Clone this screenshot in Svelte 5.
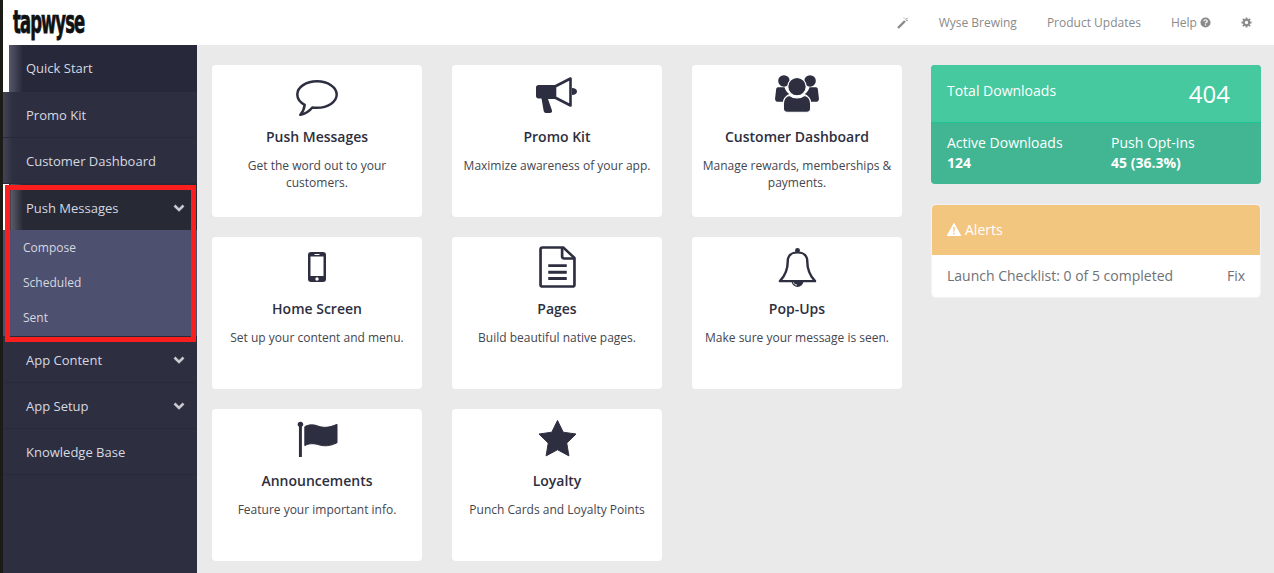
<script>
	const top = [
		{ label: 'Quick Start', cls: 'active' },
		{ label: 'Promo Kit', cls: 'fade' },
		{ label: 'Customer Dashboard', cls: 'fade' }
	];
	const pushItems = ['Compose', 'Scheduled', 'Sent'];
	const bottom = [
		{ label: 'App Content', chevron: true },
		{ label: 'App Setup', chevron: true },
		{ label: 'Knowledge Base' }
	];
	const cards = [
		{ icon: 'chat', title: 'Push Messages', text: 'Get the word out to your customers.' },
		{ icon: 'horn', title: 'Promo Kit', text: 'Maximize awareness of your app.' },
		{ icon: 'users', title: 'Customer Dashboard', text: 'Manage rewards, memberships & payments.' },
		{ icon: 'phone', title: 'Home Screen', text: 'Set up your content and menu.' },
		{ icon: 'page', title: 'Pages', text: 'Build beautiful native pages.' },
		{ icon: 'bell', title: 'Pop-Ups', text: 'Make sure your message is seen.' },
		{ icon: 'flag', title: 'Announcements', text: 'Feature your important info.' },
		{ icon: 'star', title: 'Loyalty', text: 'Punch Cards and Loyalty Points' }
	];
</script>

{#snippet chevron()}
	<svg class="chev" viewBox="0 0 12 8" width="12" height="8"><path d="M1.500 1.500 6 6l4.500-4.500" fill="none" stroke="currentColor" stroke-width="2.600" /></svg>
{/snippet}

<div class="page">
	<header class="topbar">
		<span class="logo">tapwyse</span>
		<nav>
			<svg class="wand" viewBox="0 0 12 12" width="12" height="12"><path d="M1 11 8 4" stroke="currentColor" stroke-width="2.400" /><path d="M9 1v2M11 3.500H9M7 .5v1M11 .8l-1 1" stroke="currentColor" stroke-width=".8" /></svg>
			<a href="#a">Wyse Brewing</a>
			<a href="#a">Product Updates</a>
			<a href="#a" class="help">Help
				<svg viewBox="0 0 12 12" width="11" height="11"><circle cx="6" cy="6" r="5.500" fill="currentColor" /><path d="M4.200 4.700C4.300 3.600 5 3 6 3s1.900.6 1.900 1.600C7.900 5.900 6 5.800 6 7" fill="none" stroke="#fff" stroke-width="1.300" /><rect x="5.300" y="8" width="1.400" height="1.400" fill="#fff" /></svg>
			</a>
			<svg class="gear" viewBox="0 0 12 12" width="11" height="11"><circle cx="6" cy="6" r="2.900" fill="none" stroke="currentColor" stroke-width="2.200" /><path d="M6 .5v2M6 9.500v2M.5 6h2M9.500 6h2M2.100 2.100l1.400 1.400M8.500 8.500l1.400 1.400M2.100 9.900l1.400-1.400M8.500 3.500l1.400-1.400" stroke="currentColor" stroke-width="2" /></svg>
		</nav>
	</header>

	<div class="body">
		<aside>
			{#each top as item}
				<a href="#a" class="side {item.cls}">{item.label}</a>
			{/each}
			<div class="push">
				<a href="#a" class="side active">Push Messages {@render chevron()}</a>
				<div class="sub">
					{#each pushItems as s}
						<a href="#a">{s}</a>
					{/each}
				</div>
				<div class="highlight"></div>
			</div>
			{#each bottom as item}
				<a href="#a" class="side">{item.label}{#if item.chevron}{@render chevron()}{/if}</a>
			{/each}
		</aside>

		<main>
			<section class="grid">
				{#each cards as card}
					<article>
						<div class="ico">
							{#if card.icon === 'chat'}
								<svg viewBox="0 0 44 42" width="44" height="42"><path d="M22 7.300C11.100 7.300 2.300 13.200 2.300 20.500c0 4.200 2.900 7.900 7.400 10.300-.5 3.800-2 7.400-4.400 10 4.800-.8 9-3.500 12-7.300 1.500.2 3.100.3 4.700.3 10.900 0 19.700-5.900 19.700-13.200S32.900 7.300 22 7.300Z" fill="none" stroke="#2d2f40" stroke-width="2.500" stroke-linejoin="round" /></svg>
							{:else if card.icon === 'horn'}
								<svg viewBox="0 0 42 36" width="42" height="36"><path d="M19 9.500 34.500 1.500v27L19 20.500Z" fill="none" stroke="#2d2f40" stroke-width="2.600" stroke-linejoin="round" /><path d="M2.500 8H19v14h-7l4 11.500c.3 1.300-.5 2.500-2 2.500h-4c-1.300 0-2-.7-2.300-2L5.500 21.500H2.500C1 21.500 0 20.500 0 19v-8.500C0 9 1 8 2.500 8Z" fill="#2d2f40" /><path d="M36 11c3 0 5 1.500 5 3.500S39 18 36 18Z" fill="#2d2f40" /></svg>
							{:else if card.icon === 'users'}
								<svg viewBox="0 0 44 40" width="46" height="42"><circle cx="9.500" cy="6.500" r="5.500" fill="#2d2f40" /><circle cx="34.500" cy="6.500" r="5.500" fill="#2d2f40" /><path d="M2 15c0-2 1-2.500 3-2.500h5c1 3 2.500 5 4.500 6.500-3 1.500-5.500 4-6 7.500H4c-2 0-3-1-3-3Z" fill="#2d2f40" /><path d="M42 15c0-2-1-2.500-3-2.500h-5c-1 3-2.500 5-4.500 6.500 3 1.500 5.500 4 6 7.500H40c2 0 3-1 3-3Z" fill="#2d2f40" /><circle cx="22" cy="12" r="8.800" fill="#2d2f40" stroke="#fff" stroke-width="1" /><path d="M15 20.500c2 1.500 4.500 2.300 7 2.300s5-.8 7-2.300c3.500.5 6 3.500 6 8.500v4c0 2.500-1.500 3.500-3.500 3.500h-19C10.500 36.500 9 35.500 9 33v-4c0-5 2.500-8 6-8.500Z" fill="#2d2f40" stroke="#fff" stroke-width="1" /></svg>
							{:else if card.icon === 'phone'}
								<svg viewBox="0 0 18 30" width="18" height="30"><rect width="18" height="30" rx="3" fill="#2d2f40" /><rect x="2.500" y="4.500" width="13" height="19.500" fill="#fff" /><rect x="6.500" y="2" width="5" height="1" fill="#fff" /><circle cx="9" cy="27" r="1.700" fill="#fff" /></svg>
							{:else if card.icon === 'page'}
								<svg viewBox="0 0 36 44" width="37" height="42" preserveAspectRatio="none"><path d="M3.500 1.500h20l11 11v28c0 1.200-.8 2-2 2h-29c-1.200 0-2-.8-2-2v-37c0-1.200.8-2 2-2Z" fill="none" stroke="#2d2f40" stroke-width="2.600" stroke-linejoin="round" /><path d="M22.500 2v9c0 1.200.8 2 2 2h9.500" fill="none" stroke="#2d2f40" stroke-width="2.600" /><path d="M9 19h18v3H9ZM9 26h18v3H9ZM9 32.500h18v3H9Z" fill="#2d2f40" /></svg>
							{:else if card.icon === 'bell'}
								<svg viewBox="0 0 40 42" width="39" height="42"><path d="M20 6c-6 0-10 3.500-10 9 0 8-2 14-8 20.500h36c-6-6.500-8-12.500-8-20.500 0-5.500-4-9-10-9Z" fill="none" stroke="#2d2f40" stroke-width="2.500" stroke-linejoin="round" /><circle cx="20" cy="4" r="2.500" fill="#2d2f40" /><path d="M14 36.500c.5 3 3 5 6 5s5.500-2 6-5Z" fill="#2d2f40" /><path d="M15.800 36.800c.5 1.700 2 2.700 3.700 2.700" fill="none" stroke="#fff" stroke-width="1" /></svg>
							{:else if card.icon === 'flag'}
								<svg viewBox="0 0 42 38" width="41" height="36" preserveAspectRatio="none"><circle cx="3.500" cy="3.500" r="2.800" fill="#2d2f40" /><rect x="2" y="5" width="3" height="33" fill="#2d2f40" /><path d="M8 6c4-2.500 9-2.500 14-.5 6 2 11 1.500 19-2v19.500c-7 3.500-13 4-19 2-5-1.500-10-1.500-14 1Z" fill="#2d2f40" stroke="#2d2f40" stroke-width="1" stroke-linejoin="round" /></svg>
							{:else}
								<svg viewBox="0 0 40 41" width="39" height="41"><path d="m20 1 5.900 12 13.100 1.900-9.500 9.300 2.200 13.100L20 31l-11.700 6.300 2.200-13.100L1 14.900 14.100 13Z" fill="#2d2f40" stroke="#2d2f40" stroke-linejoin="round" /></svg>
							{/if}
						</div>
						<h3>{card.title}</h3>
						<p>{card.text}</p>
					</article>
				{/each}
			</section>

			<section class="right">
				<div class="stats">
					<div class="total">
						<span>Total Downloads</span>
						<strong>404</strong>
					</div>
					<div class="split">
						<div>Active Downloads<b>124</b></div>
						<div>Push Opt-ins<b>45 (36.3%)</b></div>
					</div>
				</div>
				<div class="alerts">
					<div class="alert-head">
						<svg viewBox="0 0 14 13" width="14" height="13"><path d="M7 .5 13.700 12.500H.3Z" fill="#fff" stroke="#fff" stroke-linejoin="round" /><path d="M6.200 4h1.600l-.2 4.800H6.400ZM6.200 9.700h1.600v1.500H6.200Z" fill="#f3c680" /></svg>
						Alerts
					</div>
					<div class="alert-row">
						<span>Launch Checklist: 0 of 5 completed</span>
						<a href="#a">Fix</a>
					</div>
				</div>
			</section>
		</main>
	</div>
</div>

<style>
	:global(body) {
		margin: 0;
		background: #eaeaea;
		font-family: 'Open Sans', sans-serif;
		overflow: hidden;
	}

	a {
		color: inherit;
		text-decoration: none;
	}

	.page {
		height: 573px;
		display: flex;
		flex-direction: column;
		border-left: 3px solid #1b1b18;
	}

	.topbar {
		height: 45px;
		flex: none;
		background: #fff;
		display: flex;
		justify-content: space-between;
		align-items: center;
		padding: 0 22px 0 10px;
	}

	.logo {
		font-family: 'DejaVu Sans', sans-serif;
		font-stretch: condensed;
		font-weight: 700;
		font-size: 25px;
		line-height: 30px;
		color: #111;
		letter-spacing: -1.200px;
		transform: scale(0.73, 1.25);
		transform-origin: left center;
		-webkit-text-stroke: 0.6px #111;
	}

	nav {
		display: flex;
		align-items: center;
		font-size: 12px;
		color: #8a8a8a;
		gap: 30px;
	}

	.help svg {
		vertical-align: -1px;
	}

	.body {
		flex: 1;
		display: flex;
		min-height: 0;
	}

	aside {
		width: 194px;
		flex: none;
		background: #2d2f40;
		font-size: 13px;
		color: #d6d8e0;
	}

	.side {
		display: flex;
		justify-content: space-between;
		align-items: center;
		height: 46px;
		padding: 0 12px 0 23px;
		border-bottom: 1px solid #282a39;
		box-sizing: border-box;
	}

	.active {
		height: 47px;
		background: linear-gradient(to right, #56576a, #27293a 14px);
		background-clip: padding-box;
		border-left: 6px solid #fff;
		border-bottom: 0;
		padding-left: 17px;
		padding-bottom: 2px;
	}

	.fade {
		background: linear-gradient(to right, rgba(255, 255, 255, 0.1), transparent 10px);
	}

	.push {
		position: relative;
	}

	.push .active {
		height: 46px;
		padding-bottom: 0;
		padding-top: 2px;
		background: linear-gradient(to right, #27293a 1px, #5a5b6a 2px, #272935 14px);
		background-clip: padding-box;
	}

	.highlight {
		position: absolute;
		left: 2px;
		right: 1px;
		top: 1px;
		bottom: -5px;
		border: 5px solid #fb1e1e;
		pointer-events: none;
	}

	.chev {
		color: #c8c9cf;
	}

	.sub {
		background: #4e506f;
		height: 107px;
		border-bottom: 1px solid #282a39;
		box-sizing: border-box;
		display: flex;
		flex-direction: column;
		font-size: 12px;
	}

	.sub a {
		height: 35.200px;
		flex: none;
		display: flex;
		align-items: center;
		padding-left: 20px;
	}

	main {
		flex: 1;
		display: flex;
		padding: 20px 13px 0 15px;
		gap: 29px;
		min-width: 0;
	}

	.grid {
		display: grid;
		grid-template-columns: repeat(3, 210px);
		grid-auto-rows: 152px;
		gap: 20px 30px;
	}

	article {
		background: #fff;
		border-radius: 4px;
		padding: 8px 10px 0;
		box-sizing: border-box;
		text-align: center;
		color: #2d2f40;
	}

	.ico {
		height: 44px;
		display: flex;
		align-items: center;
		justify-content: center;
	}

	h3 {
		margin: 10px 0 0;
		font-size: 14px;
		font-weight: 600;
		line-height: 19px;
	}

	p {
		margin: 11px 0 0;
		font-size: 12px;
		line-height: 17px;
		color: #44464f;
	}

	.right {
		width: 330px;
		flex: none;
		display: flex;
		flex-direction: column;
		gap: 21px;
	}

	.stats {
		background: #42b693;
		border-radius: 4px;
		color: #fff;
		height: 119px;
		overflow: hidden;
		font-size: 14px;
	}

	.total {
		height: 58px;
		background: #46c99e;
		border-bottom: 1px solid #1fc38f;
		display: flex;
		justify-content: space-between;
		padding: 16px 31px 0 16px;
		box-sizing: border-box;
	}

	.total strong {
		font-weight: 400;
		font-size: 24px;
		line-height: 24px;
		margin-top: 1px;
	}

	.split {
		display: grid;
		grid-template-columns: 164px 1fr;
		padding: 10px 16px 0;
		line-height: 20px;
	}

	.split b {
		display: block;
		font-weight: 700;
	}

	.alerts {
		background: #fff;
		border-radius: 4px;
		overflow: hidden;
		height: 92px;
		margin: 0 1px;
		box-shadow: 0 0 0 1px #f1f3f6;
	}

	.alert-head {
		height: 50px;
		background: #f3c680;
		color: #fff;
		font-size: 14px;
		display: flex;
		align-items: center;
		gap: 4px;
		padding: 0 0 2px 15px;
		box-sizing: border-box;
	}

	.alert-row {
		display: flex;
		justify-content: space-between;
		padding: 11px 15px 0;
		font-size: 14px;
		color: #6f7175;
	}
</style>
